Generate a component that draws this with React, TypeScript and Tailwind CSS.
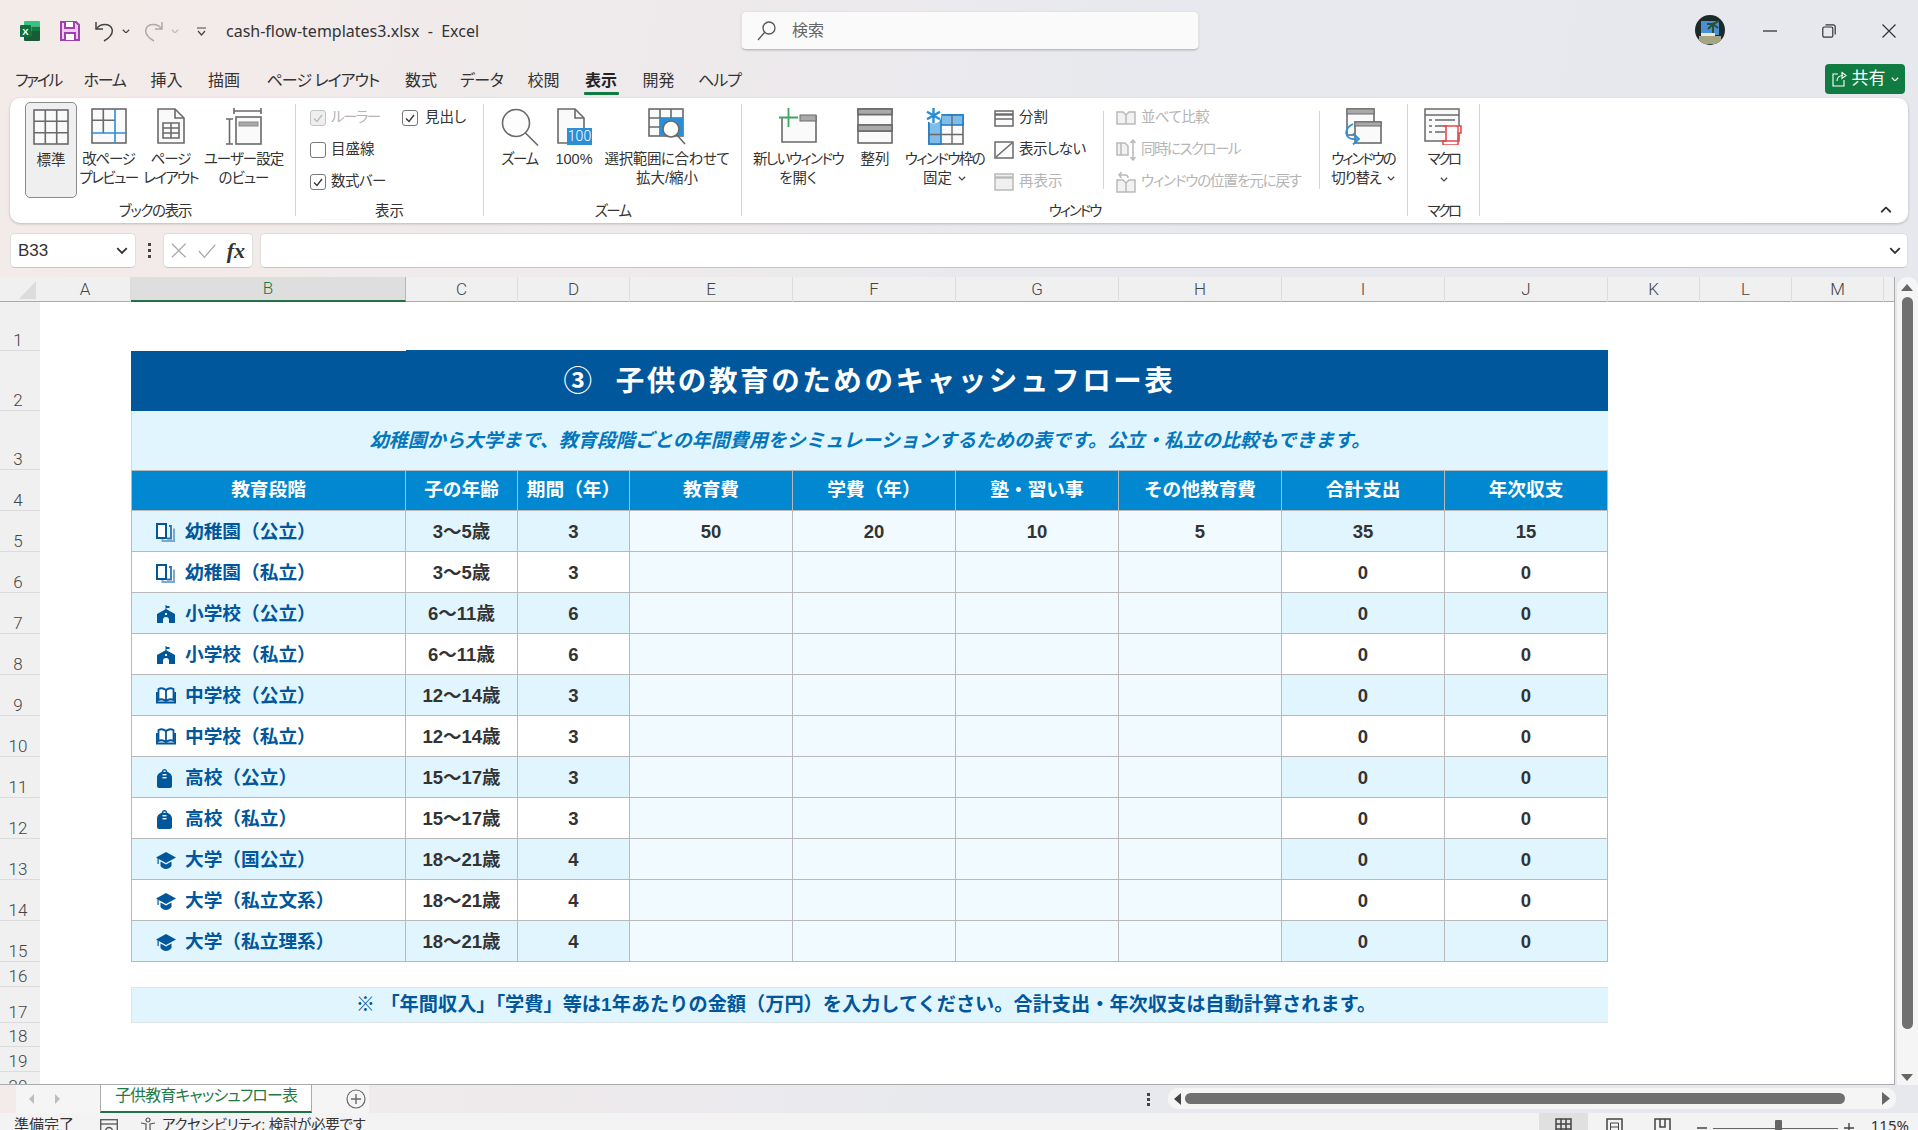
import type { ReactNode } from 'react'

const GREY = '#6a6a6a'
const DIS = '#b9b9b9'

// ---- ribbon icons ----
function IconNormal() {
  return (
    <svg width="36" height="36" viewBox="0 0 36 36" fill="#fafafa" stroke={GREY} strokeWidth="1.6">
      <rect x="1" y="1" width="34" height="34" />
      <path d="M12.3 1v34M23.7 1v34M1 12.3h34M1 23.7h34" fill="none" />
    </svg>
  )
}

function IconPageBreak() {
  return (
    <svg width="36" height="36" viewBox="0 0 36 36" fill="none" strokeWidth="1.6">
      <rect x="1" y="1" width="34" height="34" fill="#fafafa" stroke={GREY} />
      <path d="M12.3 1v24M1 12.3h23" stroke={GREY} />
      <path d="M24 1v34M1 25h34" stroke="#2b8fd6" />
    </svg>
  )
}

function IconPageLayout() {
  return (
    <svg width="28" height="36" viewBox="0 0 28 36" fill="none" stroke={GREY} strokeWidth="1.6">
      <path d="M1 1h17l9 9v25H1z" fill="#fafafa" />
      <path d="M18 1v9h9" />
      <path d="M6 15h16v15H6zM6 20h16M6 25h16M14 15v15" />
    </svg>
  )
}

function IconCustomView() {
  return (
    <svg width="37" height="37" viewBox="0 0 37 37" fill="none" stroke={GREY} strokeWidth="1.6">
      <path d="M9 3h27M9 0v6M36 0v6M1 11h7M1 36h7M4.5 11v25" />
      <rect x="11" y="9" width="25" height="27" fill="#fafafa" />
      <rect x="14" y="14" width="19" height="4" fill="#aaa" stroke="#888" strokeWidth="1" />
    </svg>
  )
}

function IconZoom() {
  return (
    <svg width="38" height="38" viewBox="0 0 38 38" fill="none" stroke={GREY} strokeWidth="1.6">
      <circle cx="15" cy="15" r="13.5" fill="#fdfdfd" />
      <path d="M24.5 25l12.5 12.5" />
    </svg>
  )
}

function Icon100() {
  return (
    <svg width="35" height="37" viewBox="0 0 35 37" fill="none" stroke={GREY} strokeWidth="1.6">
      <path d="M1 1h17l9 9v25H1z" fill="#fafafa" />
      <path d="M18 1v9h9" />
      <rect x="10" y="20" width="25" height="17" fill="#2b8fd6" stroke="none" />
      <text x="22.5" y="33" fontSize="14" fill="#fff" stroke="none" textAnchor="middle" fontFamily="Roboto, sans-serif" fontWeight="300">100</text>
    </svg>
  )
}

function IconZoomSelection() {
  return (
    <svg width="38" height="37" viewBox="0 0 38 37" fill="none" stroke={GREY} strokeWidth="1.6">
      <rect x="1" y="1" width="34" height="27" fill="#fafafa" />
      <path d="M12 1v27M23 1v27M1 10h34M1 19h34" />
      <rect x="12" y="10" width="23" height="18" fill="#2b8fd6" stroke="none" />
      <circle cx="23" cy="21" r="8" fill="#fff" />
      <path d="M29 27l8 9" />
    </svg>
  )
}

function IconNewWindow() {
  return (
    <svg width="38" height="35" viewBox="0 0 38 35" fill="none">
      <path d="M3 9v25h34V8H21" stroke={GREY} strokeWidth="1.6" fill="#fafafa" />
      <rect x="21" y="7" width="16" height="6" fill="#aaa" stroke={GREY} strokeWidth="1" />
      <path d="M9.5 0v19M0 9.5h19" stroke="#3da660" strokeWidth="1.8" />
    </svg>
  )
}

function IconArrange() {
  return (
    <svg width="36" height="36" viewBox="0 0 36 36" stroke={GREY} strokeWidth="1.6" fill="#fafafa">
      <rect x="1" y="1" width="34" height="34" />
      <path d="M1 6.5h34M1 17h34M1 23h34" fill="none" />
      <rect x="1" y="1" width="34" height="5.5" fill="#aaa" />
      <rect x="1" y="17" width="34" height="6" fill="#aaa" />
    </svg>
  )
}

function IconFreeze() {
  return (
    <svg width="38" height="37" viewBox="0 0 38 37" fill="none">
      <rect x="3" y="7" width="34" height="29" fill="#fafafa" stroke={GREY} strokeWidth="1.6" />
      <rect x="3" y="7" width="34" height="10" fill="#7fbcea" stroke="#1f7fc9" strokeWidth="1.6" />
      <rect x="3" y="7" width="12" height="29" fill="#7fbcea" stroke="#1f7fc9" strokeWidth="1.6" />
      <path d="M15 26.5h22M26 7v29M3 26.5h12" stroke={GREY} strokeWidth="1.4" />
      <circle cx="7.500" cy="7.500" r="8" fill="#fff" />
      <path d="M7.500 0v15M1 3.800l13 7.400M14 3.800L1 11.200" stroke="#2b8fd6" strokeWidth="2.400" />
    </svg>
  )
}

function IconSplit() {
  return (
    <svg width="20" height="17" viewBox="0 0 20 17" fill="#fbfbfb" stroke={GREY} strokeWidth="1.5">
      <rect x="1" y="1" width="18" height="15" />
      <path d="M1 4.5h18" strokeWidth="2.4" />
      <path d="M1 9h18" />
    </svg>
  )
}

function IconHide() {
  return (
    <svg width="20" height="18" viewBox="0 0 20 18" fill="#fbfbfb" stroke={GREY} strokeWidth="1.5">
      <rect x="1" y="1" width="18" height="16" />
      <path d="M2 16L18 2" />
    </svg>
  )
}

function IconUnhide() {
  return (
    <svg width="20" height="18" viewBox="0 0 20 18" fill="#f0f0f0" stroke={DIS} strokeWidth="1.5">
      <rect x="1" y="1" width="18" height="16" />
      <path d="M1 4.5h18" strokeWidth="2.4" />
    </svg>
  )
}

function IconCompare() {
  return (
    <svg width="20" height="14" viewBox="0 0 20 14" fill="#f2f2f2" stroke={DIS} strokeWidth="1.5">
      <path d="M1 13V1h6l3 3v9zM10 13V4l3-3h6v12z" />
    </svg>
  )
}

function IconSync() {
  return (
    <svg width="20" height="22" viewBox="0 0 20 22" fill="#f2f2f2" stroke={DIS} strokeWidth="1.5">
      <path d="M1 16V4h8l3 3v9zM1 16" />
      <path d="M5 4v12" />
      <path d="M17 1v20M14.5 4L17 1l2.5 3M14.5 18l2.5 3 2.5-3" fill="none" />
    </svg>
  )
}

function IconReset() {
  return (
    <svg width="20" height="22" viewBox="0 0 20 22" fill="#f2f2f2" stroke={DIS} strokeWidth="1.5">
      <path d="M1 21V9h6l3 3v9zM10 21v-9l3-3h6v12z" />
      <path d="M3 4h6a3 3 0 013 3M5.5 1L3 4l2.5 3" fill="none" />
    </svg>
  )
}

function IconSwitch() {
  return (
    <svg width="38" height="37" viewBox="0 0 38 37" fill="none">
      <rect x="3" y="1" width="27" height="26" fill="#fafafa" stroke={GREY} strokeWidth="1.6" />
      <rect x="3" y="1" width="27" height="5" fill="#aaa" stroke={GREY} strokeWidth="1" />
      <rect x="11" y="14" width="26" height="21" fill="#fafafa" stroke={GREY} strokeWidth="1.6" />
      <rect x="11" y="14" width="26" height="4" fill="#aaa" stroke={GREY} strokeWidth="1" />
      <path d="M9 16C-1 20 0 33 13 31M9 25.500l6 5.500-6 5.500" stroke="#2b8fd6" strokeWidth="1.8" />
    </svg>
  )
}

function IconMacro() {
  return (
    <svg width="39" height="37" viewBox="0 0 39 37" fill="none">
      <rect x="1" y="1" width="34" height="32" fill="#fafafa" stroke={GREY} strokeWidth="1.5" />
      <path d="M1 7h34" stroke={GREY} strokeWidth="1.5" />
      <path d="M5 12h3M11 12h20M5 18h3M11 18h12M5 24h3M11 24h10" stroke={GREY} strokeWidth="1.4" />
      <path d="M20 18h17v7h-3v12H19v-4h3V19z" fill="#fff" stroke="#e8474a" strokeWidth="1.6" />
      <path d="M34 18v7M19 33h15" stroke="#e8474a" strokeWidth="1.4" />
    </svg>
  )
}

// ---- emoji style icons in the first column ----
function Books() {
  return (
    <svg width="20" height="19" viewBox="0 0 20 19">
      <path d="M7 1h3v14H1V5z" fill="#fff" stroke="#01579b" strokeWidth="2" />
      <path d="M1 1h9v14H1z" fill="#fff" stroke="#01579b" strokeWidth="2" />
      <path d="M13 3h2v12.500h-4" fill="none" stroke="#2f74b0" strokeWidth="1.800" />
      <path d="M18 5.500V18H6.500v-2" fill="none" stroke="#7aa8d2" strokeWidth="2" />
    </svg>
  )
}

function School() {
  return (
    <svg width="20" height="18" viewBox="0 0 20 18" fill="#01579b">
      <path d="M9.500 0h1v1h3v2h-3v3h-1z" />
      <path d="M1 9l9-5 9 5v9h-6v-3a3 3 0 00-6 0v3H1z" />
      <rect x="9" y="8" width="2" height="2" fill="#e1f5fe" />
    </svg>
  )
}

function Book() {
  return (
    <svg width="20" height="18" viewBox="0 0 20 18" fill="none" stroke="#01579b" strokeWidth="1.8">
      <path d="M2.500 2c2-1 5-1 7.500 1 2.500-2 5.500-2 7.500-1v11c-2-1-5-1-7.500 1-2.500-2-5.500-2-7.500-1z" fill="#fff" />
      <path d="M10 3v11" />
      <path d="M.9 5v10.500h18.200V5" strokeWidth="2" />
    </svg>
  )
}

function Bag() {
  return (
    <svg width="17" height="20" viewBox="0 0 17 20" fill="#01579b">
      <path d="M6 3.500a2.500 2.500 0 015 0l2.500 1.500c1.500 1 2.500 2.500 2.500 4.500v8.500a2 2 0 01-2 2H3a2 2 0 01-2-2V9.500C1 7.500 2 6 3.500 5z" />
      <rect x="7.500" y="2.500" width="2" height="1.500" fill="#e1f5fe" />
      <rect x="6.500" y="6" width="4" height="1.400" fill="#fff" />
      <rect x="6.500" y="9" width="4" height="1.400" fill="#fff" />
    </svg>
  )
}

function Cap() {
  return (
    <svg width="20" height="17" viewBox="0 0 20 17" fill="#01579b">
      <path d="M10 0l10 5.500-10 5.500L0 5.500z" />
      <path d="M4.500 9.500l5.500 3 5.500-3V14c-1.500 2-3.500 3-5.500 3s-4-1-5.500-3z" />
      <path d="M1.500 6h1.200v6h-1.200z" />
    </svg>
  )
}

// ---- small helpers ----
function Chevron({ className = '', color = '#444', size = 8 }: { className?: string; color?: string; size?: number }) {
  return (
    <svg className={className} width={size} height={size * 0.62} viewBox="0 0 8 5" fill="none" stroke={color} strokeWidth="1.2">
      <path d="M.8.800L4 4l3.200-3.200" />
    </svg>
  )
}

function Check({ checked, disabled }: { checked?: boolean; disabled?: boolean }) {
  return (
    <span
      className={
        disabled
          ? 'w-[16px] h-[16px] rounded-[3px] border border-[#c4c4c4] bg-[#efefef] flex items-center justify-center'
          : 'w-[16px] h-[16px] rounded-[3px] border border-[#777] bg-white flex items-center justify-center'
      }
    >
      {checked && (
        <svg width="10" height="9" viewBox="0 0 10 9" fill="none" stroke={disabled ? '#bbb' : '#333'} strokeWidth="1.3">
          <path d="M1 4.500l3 3L9 1" />
        </svg>
      )}
    </span>
  )
}

function BigButton({ w, icon, lines, active }: { w: string; icon: ReactNode; lines: ReactNode[]; active?: boolean }) {
  return (
    <div className={`${w} h-[96px] flex flex-col items-center pt-[6px] leading-[19px] text-center ${active ? 'bg-[#efefef] border border-[#8a8a8a] rounded-[5px] pt-[5px]' : ''}`}>
      <div className="h-[42px] flex items-start justify-center">{icon}</div>
      {lines.map((l, i) => (
        <div key={i} className="whitespace-nowrap flex items-center justify-center">{l}</div>
      ))}
    </div>
  )
}

function Sep() {
  return <div className="w-[1px] h-[112px] mt-[2px] bg-[#d4d4d4] shrink-0" />
}

function Group({ w, label, track, children }: { w: string; label: string; track: string; children: ReactNode }) {
  return (
    <div className={`${w} shrink-0 flex flex-col`}>
      <div className="h-[96px] flex">{children}</div>
      <div className={`mt-[3px] h-[20px] leading-[20px] text-center text-[14.500px] text-[#333] ${track}`}>{label}</div>
    </div>
  )
}

function SmallRow({ icon, label, disabled, track = '' }: { icon: ReactNode; label: string; disabled?: boolean; track?: string }) {
  return (
    <div className={`h-[30px] flex items-center whitespace-nowrap ${track} ${disabled ? 'text-[#b5b5b5]' : ''}`}>
      <span className="w-[25px] flex justify-start">{icon}</span>
      {label}
    </div>
  )
}

// ---- title / tabs / ribbon ----
function TitleBar() {
  return (
    <div className="h-[62px] flex items-center shrink-0">
      <div className="w-[741px] flex items-center shrink-0">
        <svg className="ml-[20px]" width="20" height="20" viewBox="0 0 20 20">
          <path d="M5 0h14a1 1 0 011 1v4.500H4V1a1 1 0 011-1z" fill="#33c481" />
          <rect x="4" y="5.500" width="8" height="4.500" fill="#21a366" />
          <rect x="12" y="5.500" width="8" height="4.500" fill="#107c41" />
          <rect x="4" y="10" width="8" height="5" fill="#107c41" />
          <rect x="12" y="10" width="8" height="5" fill="#185c37" />
          <path d="M4 15h16v4a1 1 0 01-1 1H5a1 1 0 01-1-1z" fill="#185c37" />
          <rect x="0" y="4" width="11" height="12" rx="1" fill="#0f6f3b" />
          <text x="5.500" y="13.500" fontSize="9.500" fontWeight="700" fill="#fff" textAnchor="middle" fontFamily="Liberation Sans, sans-serif">X</text>
        </svg>
        <svg className="ml-[20px]" width="20" height="20" viewBox="0 0 20 20" fill="none" stroke="#a23fb0" strokeWidth="2">
          <path d="M1 1h15l3 3v15H1z" fill="#e9cdea" />
          <path d="M5 1v6h9V1M5 19v-7h10v7" fill="#fff" />
        </svg>
        <svg className="ml-[15px]" width="19" height="21" viewBox="0 0 19 21" fill="none" stroke="#444" strokeWidth="1.500">
          <path d="M1 1v7h7" />
          <path d="M1.500 8C5 2 15 2 17 8c1.500 5-3 9-8 12" />
        </svg>
        <Chevron className="ml-[8px]" />
        <svg className="ml-[14px]" width="19" height="21" viewBox="0 0 19 21" fill="none" stroke="#aaa" strokeWidth="1.500">
          <path d="M18 1v7h-7" />
          <path d="M17.500 8C14 2 4 2 2 8c-1.500 5 3 9 8 12" />
        </svg>
        <Chevron className="ml-[8px]" color="#bbb" />
        <svg className="ml-[18px]" width="9" height="9" viewBox="0 0 9 9" fill="none" stroke="#444" strokeWidth="1.200">
          <path d="M0 1h9M1 4l3.500 4L8 4" />
        </svg>
        <span className="ml-[20px] text-[16px] text-[#333] font-['Noto_Sans','Noto_Sans_CJK_JP',sans-serif] whitespace-pre">cash-flow-templates3.xlsx  -  Excel</span>
      </div>
      <div className="w-[458px] h-[39px] -mt-[1px] bg-[#fafafa] rounded-[5px] border border-[#e3e3e3] border-b-[#bdbdbd] shadow-[0_1px_2px_rgba(0,0,0,0.12)] flex items-center shrink-0">
        <svg className="ml-[15px]" width="19" height="20" viewBox="0 0 19 20" fill="none" stroke="#555" strokeWidth="1.300">
          <circle cx="12" cy="7" r="6" />
          <path d="M7.500 11.500L1 19" />
        </svg>
        <span className="ml-[16px] text-[16px] text-[#666]">検索</span>
      </div>
      <div className="ml-[496px] w-[30px] h-[30px] rounded-full overflow-hidden shrink-0 -mt-[2px]">
        <svg width="30" height="30" viewBox="0 0 30 30">
          <rect width="30" height="30" fill="#1c2a2a" />
          <rect x="6" y="6" width="18" height="14" fill="#4a90d6" />
          <path d="M18 20V8M12 9l6 0 6-3M13 14l5-5 5 4" stroke="#2f4f2f" strokeWidth="2" fill="none" />
          <rect x="6" y="18" width="14" height="3" fill="#e8e8e0" />
          <rect x="4" y="21" width="22" height="8" fill="#a5a583" />
        </svg>
      </div>
      <svg className="ml-[38px]" width="14" height="2" viewBox="0 0 14 2"><path d="M0 1h14" stroke="#333" strokeWidth="1.300" /></svg>
      <svg className="ml-[45px]" width="14" height="14" viewBox="0 0 14 14" fill="none" stroke="#333" strokeWidth="1.200">
        <rect x=".800" y="3" width="10" height="10.200" rx="1.500" />
        <path d="M3.500.800h7.700a2 2 0 012 2v7.700" />
      </svg>
      <svg className="ml-[46px]" width="14" height="14" viewBox="0 0 14 14" fill="none" stroke="#333" strokeWidth="1.200">
        <path d="M.500.500l13 13M13.500.500l-13 13" />
      </svg>
    </div>
  )
}

const tabs: [string, string][] = [
  ['ファイル', 'w-[66px] tracking-[-2.400px]'],
  ['ホーム', 'w-[67px] tracking-[-1.300px]'],
  ['挿入', 'w-[57px]'],
  ['描画', 'w-[58px]'],
  ['ページ レイアウト', 'w-[140px] tracking-[-1px]'],
  ['数式', 'w-[56px]'],
  ['データ', 'w-[65px] tracking-[-0.500px]'],
  ['校閲', 'w-[59px]'],
  ['表示', 'w-[56px]'],
  ['開発', 'w-[59px]'],
  ['ヘルプ', 'w-[63px] tracking-[-1px]'],
]

function TabRow() {
  return (
    <div className="h-[36px] pl-[5px] pr-[13px] flex shrink-0 text-[16px] text-[#333]">
      {tabs.map(([t, w]) => (
        <div key={t} className={`${w} flex flex-col items-center pt-[8px]`}>
          <span className={t === '表示' ? 'leading-[22px] font-bold text-[#222] whitespace-nowrap' : 'leading-[22px] whitespace-nowrap'}>{t}</span>
          {t === '表示' && <span className="w-[35px] h-[3px] bg-[#107c41] rounded-[1px]" />}
        </div>
      ))}
      <div className="flex-1" />
      <div className="w-[80px] h-[30px] mt-[2px] rounded-[4px] bg-[#107c41] text-white flex items-center justify-center gap-[5px]">
        <svg width="15" height="16" viewBox="0 0 15 16" fill="none" stroke="#fff" strokeWidth="1.100">
          <path d="M6 3H1v12h11V9" />
          <path d="M5 10c0-3.500 2.500-5.500 6-5.500M10 1.500l4 3-4 3z" />
        </svg>
        <span className="text-[17px]">共有</span>
        <Chevron color="#fff" />
      </div>
    </div>
  )
}

function Ribbon() {
  return (
    <div className="h-[125px] mx-[10px] pt-[4px] shrink-0 bg-white rounded-[10px] shadow-[0_1px_3px_rgba(0,0,0,0.22)] flex text-[14.500px] text-[#333]">
      <Group w="w-[285px]" label="ブックの表示" track="tracking-[-1.300px] pl-[5px]">
        <div className="ml-[15px]" />
        <BigButton w="w-[52px]" active icon={<IconNormal />} lines={['標準']} />
        <BigButton w="w-[63px]" icon={<IconPageBreak />} lines={[<span className="tracking-[-1.200px]">改ページ</span>, <span className="tracking-[-1.500px]">プレビュー</span>]} />
        <BigButton w="w-[61px]" icon={<IconPageLayout />} lines={[<span className="tracking-[-1px]">ページ</span>, <span className="tracking-[-1.700px]">レイアウト</span>]} />
        <BigButton w="w-[85px]" icon={<IconCustomView />} lines={[<span className="tracking-[-1px]">ユーザー設定</span>, <span className="tracking-[-1px]">のビュー</span>]} />
      </Group>
      <Sep />
      <Group w="w-[187px]" label="表示" track="">
        <div className="pl-[14px] pt-[1px] flex flex-col gap-[2px]">
          <div className="h-[30px] flex items-center">
            <div className="w-[92px] flex items-center gap-[5px] text-[#b5b5b5] tracking-[-1.500px]"><Check checked disabled />ルーラー</div>
            <div className="flex items-center gap-[7px]"><Check checked />見出し</div>
          </div>
          <div className="h-[30px] flex items-center gap-[5px]"><Check />目盛線</div>
          <div className="h-[30px] flex items-center gap-[5px] tracking-[-0.500px]"><Check checked />数式バー</div>
        </div>
      </Group>
      <Sep />
      <Group w="w-[257px]" label="ズーム" track="tracking-[-1.800px]">
        <div className="ml-[12px]" />
        <BigButton w="w-[47px]" icon={<IconZoom />} lines={[<span className="tracking-[-1.500px]">ズーム</span>]} />
        <BigButton w="w-[62px]" icon={<Icon100 />} lines={['100%']} />
        <BigButton w="w-[124px]" icon={<IconZoomSelection />} lines={[<span className="tracking-[-0.400px]">選択範囲に合わせて</span>, '拡大/縮小']} />
      </Group>
      <Sep />
      <Group w="w-[665px]" label="ウィンドウ" track="tracking-[-2px]">
        <div className="ml-[10px]" />
        <BigButton w="w-[92px]" icon={<IconNewWindow />} lines={[<span className="tracking-[-1.500px]">新しいウィンドウ</span>, 'を開く']} />
        <BigButton w="w-[62px]" icon={<IconArrange />} lines={['整列']} />
        <BigButton
          w="w-[77px]"
          icon={<IconFreeze />}
          lines={[<span className="tracking-[-1.500px]">ウィンドウ枠の</span>, <>固定<Chevron className="ml-[6px]" /></>]}
        />
        <div className="w-[120px] pl-[11px] pt-[1px] flex flex-col gap-[2px]">
          <SmallRow icon={<IconSplit />} label="分割" />
          <SmallRow icon={<IconHide />} label="表示しない" track="tracking-[-0.500px]" />
          <SmallRow icon={<IconUnhide />} label="再表示" disabled />
        </div>
        <div className="w-[1px] h-[78px] mt-[9px] bg-[#d4d4d4]" />
        <div className="w-[215px] pl-[12px] pt-[1px] flex flex-col gap-[2px]">
          <SmallRow icon={<IconCompare />} label="並べて比較" disabled track="tracking-[-0.600px]" />
          <SmallRow icon={<IconSync />} label="同時にスクロール" disabled track="tracking-[-1.500px]" />
          <SmallRow icon={<IconReset />} label="ウィンドウの位置を元に戻す" disabled track="tracking-[-1.100px]" />
        </div>
        <div className="w-[1px] h-[78px] mt-[9px] bg-[#d4d4d4]" />
        <BigButton
          w="w-[86px]"
          icon={<IconSwitch />}
          lines={[<span className="tracking-[-2px]">ウィンドウの</span>, <span className="tracking-[-1.200px] flex items-center">切り替え<Chevron className="ml-[6px]" /></span>]}
        />
      </Group>
      <Sep />
      <Group w="w-[71px]" label="マクロ" track="tracking-[-2.700px]">
        <BigButton w="w-[71px]" icon={<IconMacro />} lines={[<span className="tracking-[-2.700px]">マクロ</span>, <Chevron className="mt-[8px]" />]} />
      </Group>
      <Sep />
      <div className="flex-1 flex items-end justify-end pr-[16px] pb-[10px]">
        <Chevron className="rotate-180" size={12} color="#333" />
      </div>
    </div>
  )
}

function FormulaBar() {
  return (
    <div className="h-[35px] mx-[10px] mt-[10px] flex shrink-0">
      <div className="w-[126px] bg-white rounded-[5px] border border-[#dedede] border-b-[#c4c4c4] flex items-center justify-between px-[7px] pt-[1px] text-[17px] text-[#333]">
        B33
        <Chevron size={12} color="#333" />
      </div>
      <div className="w-[27px] flex flex-col items-center justify-center gap-[3px]">
        <span className="w-[3px] h-[3px] bg-[#444]" />
        <span className="w-[3px] h-[3px] bg-[#444]" />
        <span className="w-[3px] h-[3px] bg-[#444]" />
      </div>
      <div className="w-[90px] bg-white rounded-[5px] border border-[#dedede] border-b-[#c4c4c4] flex items-center px-[7px]">
        <svg width="17" height="17" viewBox="0 0 17 17" fill="none" stroke="#a8a8a8" strokeWidth="1.400"><path d="M1 1l15 15M16 1L1 16" /></svg>
        <svg className="ml-[12px]" width="20" height="16" viewBox="0 0 20 16" fill="none" stroke="#a8a8a8" strokeWidth="1.400"><path d="M1 8l6 7L19 1" /></svg>
        <span className="ml-[10px] text-[22px] leading-none font-bold italic text-[#333] font-['Liberation_Serif',serif]">fx</span>
      </div>
      <div className="ml-[7px] flex-1 bg-white rounded-[5px] border border-[#dedede] border-b-[#c4c4c4] flex items-center justify-end pr-[6px]">
        <Chevron size={12} color="#333" />
      </div>
    </div>
  )
}

// ---- sheet ----
const colHeaders: [string, string][] = [
  ['A', 'w-[91px]'],
  ['B', 'w-[275px]'],
  ['C', 'w-[112px]'],
  ['D', 'w-[112px]'],
  ['E', 'w-[163px]'],
  ['F', 'w-[163px]'],
  ['G', 'w-[163px]'],
  ['H', 'w-[163px]'],
  ['I', 'w-[163px]'],
  ['J', 'w-[163px]'],
  ['K', 'w-[92px]'],
  ['L', 'w-[92px]'],
  ['M', 'w-[92px]'],
]

function ColumnHeader() {
  return (
    <div className="h-[25px] flex shrink-0 bg-[#f0f0f0] border-b border-[#ababab] text-[17px] font-light text-[#444] font-['Roboto',sans-serif]">
      <div className="w-[40px] flex items-end justify-end pr-[4px] pb-[2px]">
        <svg width="17" height="18" viewBox="0 0 17 18"><path d="M17 0v18H0z" fill="#dcdcdc" /></svg>
      </div>
      {colHeaders.map(([c, w]) => (
        <div
          key={c}
          className={
            c === 'B'
              ? `${w} h-[25px] flex items-center justify-center bg-[#dedede] text-[#107c41] border-r border-[#b5b5b5] border-b-[2px] border-b-[#217346]`
              : `${w} h-[25px] flex items-center justify-center border-r border-[#dcdcdc]`
          }
        >
          {c}
        </div>
      ))}
    </div>
  )
}

function SheetRow({ n, h, children }: { n: number; h: string; children?: ReactNode }) {
  return (
    <div className={`${h} flex shrink-0`}>
      <div className="w-[40px] shrink-0 bg-[#f0f0f0] border-b border-[#dcdcdc] flex items-end justify-center pr-[4px] text-[17px] leading-[20px] font-light text-[#444] font-['Roboto',sans-serif]">
        {n}
      </div>
      <div className="w-[91px] shrink-0" />
      {children}
    </div>
  )
}

const headers: [string, string][] = [
  ['教育段階', 'w-[275px] border-l'],
  ['子の年齢', 'w-[112px]'],
  ['期間（年）', 'w-[112px]'],
  ['教育費', 'w-[163px]'],
  ['学費（年）', 'w-[163px]'],
  ['塾・習い事', 'w-[163px]'],
  ['その他教育費', 'w-[163px]'],
  ['合計支出', 'w-[163px]'],
  ['年次収支', 'w-[163px]'],
]

type Stage = {
  icon: ReactNode
  name: string
  age: string
  years: number
  edu?: number
  fee?: number
  juku?: number
  other?: number
  total: number
  net: number
}

const stages: Stage[] = [
  { icon: <Books />, name: '幼稚園（公立）', age: '3～5歳', years: 3, edu: 50, fee: 20, juku: 10, other: 5, total: 35, net: 15 },
  { icon: <Books />, name: '幼稚園（私立）', age: '3～5歳', years: 3, total: 0, net: 0 },
  { icon: <School />, name: '小学校（公立）', age: '6～11歳', years: 6, total: 0, net: 0 },
  { icon: <School />, name: '小学校（私立）', age: '6～11歳', years: 6, total: 0, net: 0 },
  { icon: <Book />, name: '中学校（公立）', age: '12～14歳', years: 3, total: 0, net: 0 },
  { icon: <Book />, name: '中学校（私立）', age: '12～14歳', years: 3, total: 0, net: 0 },
  { icon: <Bag />, name: '高校（公立）', age: '15～17歳', years: 3, total: 0, net: 0 },
  { icon: <Bag />, name: '高校（私立）', age: '15～17歳', years: 3, total: 0, net: 0 },
  { icon: <Cap />, name: '大学（国公立）', age: '18～21歳', years: 4, total: 0, net: 0 },
  { icon: <Cap />, name: '大学（私立文系）', age: '18～21歳', years: 4, total: 0, net: 0 },
  { icon: <Cap />, name: '大学（私立理系）', age: '18～21歳', years: 4, total: 0, net: 0 },
]

function StageRow({ s, n }: { s: Stage; n: number }) {
  const band = n % 2 === 1 ? 'bg-[#e1f5fe]' : 'bg-white'
  const cell = 'flex items-center justify-center pt-[2px] border-r border-b border-[#b9b9b9] text-[18.500px] font-bold text-[#333]'
  const input = `${cell} bg-[#f0faff]`
  return (
    <SheetRow n={n} h="h-[41px]">
      <div className={`w-[275px] pl-[24px] pt-[2px] flex items-center border-l border-r border-b border-[#b9b9b9] ${band} text-[18.700px] font-bold text-[#01579b]`}>
        <span className="w-[29px] flex justify-start">{s.icon}</span>
        {s.name}
      </div>
      <div className={`w-[112px] ${cell} ${band}`}>{s.age}</div>
      <div className={`w-[112px] ${cell} ${band}`}>{s.years}</div>
      <div className={`w-[163px] ${input}`}>{s.edu}</div>
      <div className={`w-[163px] ${input}`}>{s.fee}</div>
      <div className={`w-[163px] ${input}`}>{s.juku}</div>
      <div className={`w-[163px] ${input}`}>{s.other}</div>
      <div className={`w-[163px] ${cell} ${band}`}>{s.total}</div>
      <div className={`w-[163px] ${cell} ${band}`}>{s.net}</div>
    </SheetRow>
  )
}

function Sheet() {
  return (
    <div className="h-[808px] mt-[9px] flex shrink-0 [font-feature-settings:normal]">
      <div className="w-[1895px] flex flex-col overflow-hidden bg-white border-r border-b border-[#ababab]">
        <ColumnHeader />
        <SheetRow n={1} h="h-[49px]">
          <div className="ml-[275px] self-end w-[1202px] h-[1px] bg-[#01579b]" />
        </SheetRow>
        <SheetRow n={2} h="h-[60px]">
          <div className="w-[1477px] bg-[#01579b] flex items-center justify-center text-[28.500px] font-bold tracking-[2.600px] text-white">
            ③&nbsp;&nbsp;子供の教育のためのキャッシュフロー表
          </div>
        </SheetRow>
        <SheetRow n={3} h="h-[59px]">
          <div className="w-[1477px] bg-[#e1f5fe] border-l border-[#b3e5fc] flex items-center justify-center pt-[1px] text-[19px] font-bold italic text-[#0277bd]">
            幼稚園から大学まで、教育段階ごとの年間費用をシミュレーションするための表です。公立・私立の比較もできます。
          </div>
        </SheetRow>
        <SheetRow n={4} h="h-[41px]">
          {headers.map(([t, w]) => (
            <div
              key={t}
              className={`${w} bg-[#0288d1] flex items-center justify-center border-t border-r border-b border-[#b9b9b9] text-[18.700px] font-bold text-white whitespace-nowrap`}
            >
              {t}
            </div>
          ))}
        </SheetRow>
        {stages.map((s, i) => (
          <StageRow key={s.name} s={s} n={i + 5} />
        ))}
        <SheetRow n={16} h="h-[25px]" />
        <SheetRow n={17} h="h-[36px]">
          <div className="w-[1477px] bg-[#e1f5fe] border border-[#e0e6e8] border-r-0 flex items-center justify-center pr-[8px] text-[19.200px] font-bold text-[#01579b]">
            ※ 「年間収入」「学費」等は1年あたりの金額（万円）を入力してください。合計支出・年次収支は自動計算されます。
          </div>
        </SheetRow>
        <SheetRow n={18} h="h-[24px]" />
        <SheetRow n={19} h="h-[25px]" />
        <SheetRow n={20} h="h-[25px]" />
      </div>
      <div className="ml-[2px] w-[21px] bg-[#f5f5f5] rounded-t-[10px] flex flex-col items-center pr-[1px]">
        <svg className="mt-[7px]" width="12" height="7" viewBox="0 0 12 7"><path d="M6 0l6 7H0z" fill="#666" /></svg>
        <div className="mt-[6px] w-[11px] h-[732px] rounded-[6px] bg-[#707070]" />
        <svg className="mt-[45px]" width="12" height="7" viewBox="0 0 12 7"><path d="M6 7l6-7H0z" fill="#666" /></svg>
      </div>
    </div>
  )
}

function TabBar() {
  return (
    <div className="h-[28px] flex shrink-0">
      <div className="w-[16px] shrink-0" />
      <div className="w-[84px] bg-[#f5f5f5] flex items-center">
        <svg className="ml-[13px]" width="5" height="10" viewBox="0 0 5 10"><path d="M5 0v10L0 5z" fill="#bdbdbd" /></svg>
        <svg className="ml-[21px]" width="5" height="10" viewBox="0 0 5 10"><path d="M0 0v10l5-5z" fill="#bdbdbd" /></svg>
      </div>
      <div className="w-[212px] bg-white border-l border-r border-[#ababab] border-b-[2px] border-b-[#217346] flex items-start justify-center text-[16px] leading-[22px] tracking-[-0.900px] text-[#1f7a45]">
        子供教育キャッシュフロー表
      </div>
      <div className="w-[57px] bg-[#f5f5f5] flex items-center justify-center pl-[30px]">
        <svg width="20" height="20" viewBox="0 0 20 20" fill="none" stroke="#6a6a6a" strokeWidth="1.200">
          <circle cx="10" cy="10" r="9" />
          <path d="M10 5v10M5 10h10" strokeWidth="1.400" />
        </svg>
      </div>
      <div className="ml-[774px] w-[10px] flex flex-col items-center justify-center gap-[2px]">
        <span className="w-[3px] h-[3px] bg-[#444]" />
        <span className="w-[3px] h-[3px] bg-[#444]" />
        <span className="w-[3px] h-[3px] bg-[#444]" />
      </div>
      <div className="h-[21px] mt-[3px] w-[728px] bg-[#f5f5f5] rounded-[9px] ml-[15px] flex items-center">
        <svg className="ml-[6px]" width="7" height="12" viewBox="0 0 7 12"><path d="M7 0v12L0 6z" fill="#444" /></svg>
        <div className="ml-[4px] w-[660px] h-[11px] rounded-[6px] bg-[#707070]" />
        <svg className="ml-[37px]" width="8" height="13" viewBox="0 0 8 13"><path d="M0 0v13l8-6.500z" fill="#666" /></svg>
      </div>
    </div>
  )
}

function StatusBar() {
  return (
    <div className="h-[17px] bg-[#f3f3f3] flex shrink-0 text-[15px] leading-[24px] text-[#333] overflow-hidden">
      <span className="ml-[14px] whitespace-nowrap">準備完了</span>
      <svg className="ml-[26px] mt-[6px]" width="18" height="18" viewBox="0 0 18 18" fill="none" stroke="#555" strokeWidth="1.300">
        <rect x=".700" y=".700" width="16.600" height="16" />
        <path d="M.700 5h16.600" />
        <circle cx="9" cy="12" r="3.500" />
      </svg>
      <svg className="ml-[22px] mt-[4px]" width="16" height="18" viewBox="0 0 16 18" fill="none" stroke="#555" strokeWidth="1.200">
        <circle cx="8" cy="3" r="2" />
        <path d="M1 6l5 1v5l-2 6M15 6l-5 1v5l2 6" />
      </svg>
      <span className="ml-[6px] whitespace-nowrap text-[14.500px] tracking-[-0.300px]">アクセシビリティ: 検討が必要です</span>
      <div className="flex-1" />
      <div className="w-[49px] bg-[#e0e0e0] flex justify-center pt-[5px]">
        <svg width="17" height="17" viewBox="0 0 17 17" fill="none" stroke="#444" strokeWidth="1.500"><rect x="1" y="1" width="15" height="15" /><path d="M6 1v15M11 1v15M1 6h15M1 11h15" /></svg>
      </div>
      <div className="w-[50px] flex justify-center pt-[5px] pl-[3px]">
        <svg width="17" height="17" viewBox="0 0 17 17" fill="none" stroke="#444" strokeWidth="1.500"><rect x="1" y="1" width="15" height="15" /><path d="M4.500 5h8v8h-8zM4.500 9h8" strokeWidth="1" /></svg>
      </div>
      <div className="w-[49px] flex justify-center pt-[5px]">
        <svg width="17" height="17" viewBox="0 0 17 17" fill="none" stroke="#444" strokeWidth="1.500"><path d="M1 17V1h15v16M6 1v8h5V1" /></svg>
      </div>
      <svg className="ml-[10px] mt-[14px]" width="10" height="2" viewBox="0 0 10 2"><path d="M0 1h10" stroke="#444" strokeWidth="1.500" /></svg>
      <div className="ml-[6px] w-[125px] flex mt-[15px]">
        <div className="w-[62px] h-[1px] bg-[#666]" />
        <div className="w-[7px] h-[17px] -mt-[8px] bg-[#666] rounded-[1px]" />
        <div className="w-[56px] h-[1px] bg-[#666]" />
      </div>
      <svg className="ml-[6px] mt-[10px]" width="10" height="10" viewBox="0 0 10 10"><path d="M0 5h10M5 0v10" stroke="#444" strokeWidth="1.400" /></svg>
      <span className="ml-[17px] mr-[9px] whitespace-nowrap font-['Noto_Sans',sans-serif]">115%</span>
    </div>
  )
}

export default function App() {
  return (
    <div className="w-[1918px] h-[1130px] overflow-hidden flex flex-col bg-[linear-gradient(100deg,#f3ebe8_0%,#eeeaec_35%,#e7e9ee_55%,#e7e8ed_100%)] [font-feature-settings:'palt'] font-['Liberation_Sans','Noto_Sans_CJK_JP',sans-serif]">
      <TitleBar />
      <TabRow />
      <Ribbon />
      <FormulaBar />
      <Sheet />
      <TabBar />
      <StatusBar />
    </div>
  )
}
